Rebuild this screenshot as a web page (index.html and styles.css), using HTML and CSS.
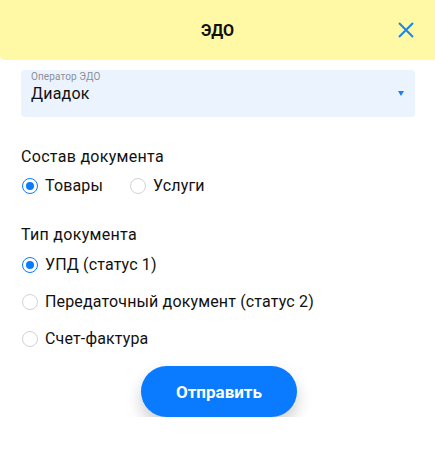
FILE: index.html
```html
<!DOCTYPE html>
<html lang="ru">
<head>
  <meta charset="UTF-8" />
  <title>ЭДО</title>
  <meta name="viewport" content="width=device-width, initial-scale=1">
  <link rel="stylesheet" href="styles.css">
</head>
<body>
  <div class="header">
    <h1>ЭДО</h1>
    <button class="close" aria-label="Закрыть">
      <svg width="16" height="16" viewBox="0 0 16 16"><path d="M1 1L15 15M15 1L1 15" stroke="#1a86e8" stroke-width="2" fill="none"/></svg>
    </button>
  </div>

  <div class="content">
    <div class="select">
      <div class="select-label">Оператор ЭДО</div>
      <div class="select-value">Диадок</div>
      <span class="arrow"></span>
    </div>

    <div class="group">
      <div class="group-title">Состав документа</div>
      <div class="radios inline">
        <label class="radio checked"><span class="dot"></span>Товары</label>
        <label class="radio"><span class="dot"></span>Услуги</label>
      </div>
    </div>

    <div class="group">
      <div class="group-title">Тип документа</div>
      <div class="radios">
        <label class="radio checked"><span class="dot"></span>УПД (статус 1)</label>
        <label class="radio"><span class="dot"></span>Передаточный документ (статус 2)</label>
        <label class="radio"><span class="dot"></span>Счет-фактура</label>
      </div>
    </div>

    <div class="actions">
      <button class="submit">Отправить</button>
    </div>
  </div>
</body>
</html>
```

FILE: styles.css
```css
body {
  margin: 0;
  font-family: Roboto, 'Noto Sans', sans-serif;
  background: white;
  color: #111;
}

.header {
  height: 60px;
  background: #fff8a4;
  border-bottom-left-radius: 5px;
  display: flex;
  align-items: center;
  justify-content: center;
  position: relative;
}

h1 {
  margin: 0;
  font-size: 16px;
  font-weight: 700;
  padding-top: 1px;
}

.close {
  position: absolute;
  right: 21px;
  top: 22px;
  border: 0;
  background: none;
  padding: 0;
  width: 16px;
  height: 16px;
  cursor: pointer;
}

.content {
  padding: 10px 20px 0 21px;
}

.select {
  position: relative;
  background: #ebf4fe;
  border-radius: 4px;
  height: 47px;
  padding: 0 10px;
  box-sizing: border-box;
}

.select-label {
  font-size: 10px;
  color: #8a8f96;
  padding-top: 1px;
  line-height: 12px;
  letter-spacing: 0.1px;
}

.select-value {
  font-size: 16px;
  line-height: 20px;
  margin-top: 1px;
  letter-spacing: 0.2px;
}

.arrow {
  position: absolute;
  right: 11px;
  top: 21px;
  border-left: 3.5px solid transparent;
  border-right: 3.5px solid transparent;
  border-top: 5px solid #1a7ff0;
}

.group {
  margin-top: 30px;
}

.group + .group {
  margin-top: 29px;
}

.group-title {
  font-size: 16px;
  line-height: 20px;
  letter-spacing: 0.3px;
}

.radios {
  display: flex;
  flex-direction: column;
  gap: 17px;
  margin-top: 9px;
}

.radios.inline {
  flex-direction: row;
  gap: 26px;
}

.group + .group .radios {
  margin-top: 10px;
}

.radio {
  display: flex;
  align-items: center;
  font-size: 16px;
  line-height: 20px;
  letter-spacing: 0.15px;
  gap: 7px;
}

.dot {
  width: 16px;
  height: 16px;
  box-sizing: border-box;
  border: 1px solid #cfd3d8;
  border-radius: 50%;
  display: flex;
  align-items: center;
  justify-content: center;
  margin-left: 1px;
}

.checked .dot {
  border: 1.5px solid #0a7aff;
}

.checked .dot::after {
  content: '';
  width: 8px;
  height: 8px;
  border-radius: 50%;
  background: #0a7aff;
}

.actions {
  display: flex;
  justify-content: center;
  margin-top: 17px;
  padding-left: 2px;
}

.submit {
  width: 156px;
  height: 51px;
  border: 0;
  border-radius: 26px;
  background: #0a7aff;
  color: white;
  font-family: inherit;
  font-size: 17px;
  font-weight: 700;
  box-shadow: 0 8px 16px rgba(0, 0, 0, 0.2);
}
```
